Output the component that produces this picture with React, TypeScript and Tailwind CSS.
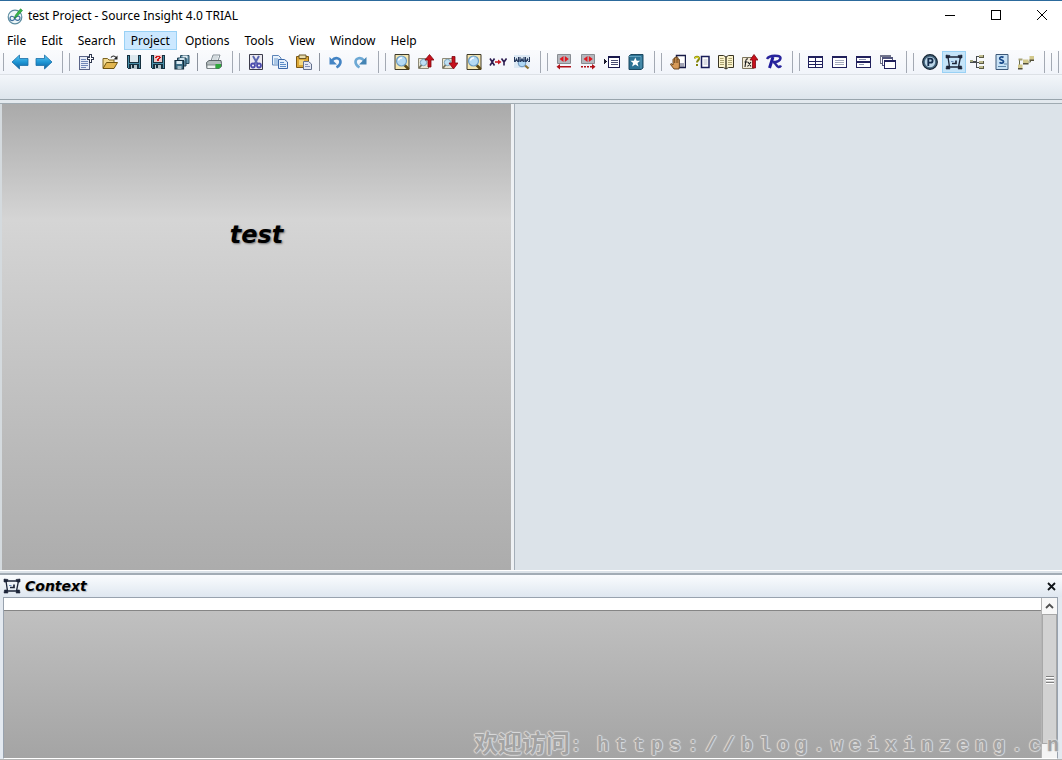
import { Fragment, type ReactNode } from "react";

const MENUS = ["File", "Edit", "Search", "Project", "Options", "Tools", "View", "Window", "Help"];

// 16x16 drawing area shared by all toolbar glyphs.
function Glyph({ children, crisp = false }: { children: ReactNode; crisp?: boolean }) {
  return (
    <svg
      width="16"
      height="16"
      viewBox="0 0 16 16"
      fill="none"
      shapeRendering={crisp ? "crispEdges" : "auto"}
      aria-hidden="true"
    >
      {children}
    </svg>
  );
}

function Arrow({ flip = false }: { flip?: boolean }) {
  return (
    <svg width="18" height="16" viewBox="0 0 18 16" aria-hidden="true">
      <defs>
        <linearGradient id={flip ? "arrR" : "arrL"} x1="0" y1="0" x2="0" y2="1">
          <stop offset="0" stopColor="#5cc8f2" />
          <stop offset="0.5" stopColor="#1f97d6" />
          <stop offset="1" stopColor="#0e5e9c" />
        </linearGradient>
      </defs>
      <path
        d={flip ? "M17 8 9.500 1v3.500H1v7h8.500V15z" : "M1 8l7.500-7v3.500H17v7H8.500V15z"}
        fill={flip ? "url(#arrR)" : "url(#arrL)"}
        stroke="#1a6ea8"
        strokeWidth="0.8"
      />
    </svg>
  );
}

function Floppy({ mark = false }: { mark?: boolean }) {
  return (
    <Glyph crisp>
      <path d="M1 1h14v14H2l-1-1z" fill="#16303f" />
      <path d="M2 2h1v12H2zM13 2h1v12h-1z" fill="#4a8ea8" />
      <path d="M4 1h8v7H4z" fill={mark ? "#eccaca" : "#dce8ee"} />
      <path d="M2 9h12v1H2z" fill="#4a8ea8" />
      <path d="M5 11h6v4H5z" fill="#b8c6cc" />
      <path d="M6 11h2v3H6z" fill="#16303f" />
      {mark && <path d="M6 2h4v1H6zM9 3h2v1H9zM8 4h2v1H8zM7 5h2v1H7zM7 6h2v1H7zM5 3h2v1H5z" fill="#d01818" />}
    </Glyph>
  );
}

// Magnifier lens over a framed page.
function Lens() {
  return (
    <Glyph>
      <path d="M1 .5h14v15H1z" fill="#f5e6b0" stroke="#3c3828" />
      <path d="M10 10.500l4 4" stroke="#5c4814" strokeWidth="2.600" strokeLinecap="round" />
      <circle cx="7.500" cy="7" r="5" fill="#b4daf4" stroke="#6c9cc4" strokeWidth="1.200" />
      <path d="M4.500 6.500a3 3 0 0 1 3.500-2.500" stroke="#fff" strokeWidth="1.500" />
    </Glyph>
  );
}

function LensArrow({ down = false }: { down?: boolean }) {
  return (
    <Glyph>
      <path d="M.5 4.500h10v10H.5z" fill="#ece8d4" stroke="#8d8a78" />
      <circle cx="5.500" cy="8.500" r="3.200" fill="#c0e0f4" stroke="#7aa2bc" />
      <path d="M3.500 11L1 14" stroke="#75705c" strokeWidth="1.800" />
      <path
        d={down ? "M10 2.500h3V9h3l-4.500 6L7 9h3z" : "M10 13h3V6h3L11.500.5 7 6h3z"}
        fill="#c8101c"
        stroke="#7c0810"
        strokeWidth="0.8"
      />
    </Glyph>
  );
}

function DiffGlyph({ right = false }: { right?: boolean }) {
  return (
    <Glyph>
      <path d="M1.500.5h13v9h-13z" fill="#b4b8be" stroke="#888c92" />
      <path d="M7.500 2v6L3.500 5zM8.800 2v6l4-3z" fill="#e01820" />
      {right ? (
        <path d="M1 12h2v1.500H1zM4 12h2v1.500H4zM7 12h2v1.500H7zM10 12h2v1.500h-2zM12 10l3.500 2.700L12 15.500z" fill="#b01018" />
      ) : (
        <path d="M4 10v5.500L.5 12.700zM4 12h11v1.500H4z" fill="#b01018" />
      )}
    </Glyph>
  );
}

// Wireframe box with corner handles, used by the toolbar and the Context pane.
function ContextGlyph() {
  return (
    <svg width="18" height="16" viewBox="0 0 18 16" fill="none" aria-hidden="true">
      <path d="M3 3h12.500L13.500 13H4.500z" stroke="#1c2438" strokeWidth="1.300" />
      <path d="M1 1l4 .5L4 4H1zM17 1l-4 .5L14 4h3zM1 15l.5-3H4l1 3zM17 15l-.5-3H14l-1 3z" fill="#1c2438" stroke="#1c2438" strokeWidth="0.6" />
      <path d="M7 9.500h4v-3" stroke="#1c2438" strokeWidth="1.700" />
      <path d="M6 7.500h2.500" stroke="#6a8cbc" />
    </svg>
  );
}

function WindowGlyph({ kind }: { kind: "grid" | "single" | "rows" | "stack" }) {
  if (kind === "stack") {
    return (
      <Glyph crisp>
        <path d="M0 1h11v9H0z" fill="#70748c" />
        <path d="M1 3h9v6H1z" fill="#fff" />
        <path d="M2 3h11v9H2z" fill="#50547c" />
        <path d="M3 5h9v6H3z" fill="#fff" />
        <path d="M4 6h12v9H4z" fill="#20205c" />
        <path d="M5 8h10v6H5z" fill="#fff" />
      </Glyph>
    );
  }
  return (
    <Glyph crisp>
      <path d="M0 2h15v12H0z" fill="#20205c" />
      {kind === "grid" && <path d="M1 4h6v3H1zM8 4h6v3H8zM1 8h6v2H1zM8 8h6v2H8zM1 11h6v2H1zM8 11h6v2H8z" fill="#fff" />}
      {kind === "single" && (
        <>
          <path d="M1 4h13v9H1z" fill="#fff" />
          <path d="M3 6h9v1H3zM3 8h9v1H3zM3 10h9v1H3z" fill="#a4aabc" />
        </>
      )}
      {kind === "rows" && (
        <>
          <path d="M1 4h13v3H1zM1 9h13v4H1z" fill="#fff" />
          <path d="M3 5h7v1H3zM3 10h5v1H3z" fill="#8c94ac" />
        </>
      )}
    </Glyph>
  );
}

const newFile = (
  <Glyph crisp>
    <path d="M1 2h11v14H1z" fill="#5a6488" />
    <path d="M2 3h9v12H2z" fill="#e6ecf8" />
    <path d="M3 5h5v1H3zM3 7h7v1H3zM3 9h7v1H3zM3 11h7v1H3zM3 13h5v1H3z" fill="#7086b8" />
    <path d="M11 0h3v3h2v3h-2v3h-3V6H9V3h2z" fill="#303850" />
    <path d="M12 1h1v3h2v1h-2v3h-1V5h-2V4h2z" fill="#fff" />
  </Glyph>
);

const openFile = (
  <Glyph>
    <path d="M1 14V4.500h4.500l1.500 1.500H12v3" fill="#f0d890" stroke="#7c6420" />
    <path d="M1 14.500L4.500 8.500H15.500L12 14.500z" fill="#e2b650" stroke="#6e5410" />
    <path d="M9 3.500c1.500-2 3.500-2 5 0" stroke="#222" strokeWidth="1.200" />
    <path d="M15.500 1.500v4h-4z" fill="#222" />
  </Glyph>
);

const saveAll = (
  <Glyph>
    <path d="M6.500 1.500H15v8H6.500z" fill="#6c9cb4" stroke="#284c60" />
    <path d="M8.500 1.500h5v3h-5z" fill="#dcebf2" />
    <path d="M3.500 4H12v8H3.500z" fill="#5c8ca4" stroke="#1c3c50" />
    <path d="M5.500 4h5v3h-5z" fill="#cfe2ec" />
    <path d="M1 6.500h8.500v8.500H1z" fill="#3c6c84" stroke="#142c3c" strokeWidth="1.200" />
    <path d="M2.500 7h5.500v3H2.500z" fill="#dceaf2" />
    <path d="M3.500 12h4v3h-4z" fill="#a4bcc8" />
  </Glyph>
);

const printer = (
  <Glyph>
    <path d="M5 7l2-6h7l-2 6z" fill="#f4f8fa" stroke="#76828a" strokeWidth="0.9" />
    <path d="M7 3h5M6.500 5h5" stroke="#a4b0b8" strokeWidth="0.8" />
    <path d="M.5 8.500L3 6.500h12l.5 3v3L13 14.500H1z" fill="#b4bcbe" stroke="#4e585c" strokeWidth="0.9" />
    <path d="M1 11h9v3.500H1z" fill="#eef2f2" stroke="#6e787c" strokeWidth="0.8" />
    <path d="M9.500 10h5.500v2.500l-2 2H9.500z" fill="#2fa83c" />
  </Glyph>
);

const cut = (
  <Glyph>
    <path d="M1.500.5h13v15h-13z" fill="#eceaf0" stroke="#3c3c4c" />
    <path d="M5 2l4.500 8M11 2L6.500 10" stroke="#5a66b0" strokeWidth="1.900" />
    <circle cx="5" cy="11.500" r="2" stroke="#4c4cae" strokeWidth="1.800" />
    <circle cx="11" cy="11.500" r="2" stroke="#4c4cae" strokeWidth="1.800" />
  </Glyph>
);

const copy = (
  <Glyph>
    <path d="M.5 1.500h6l2.500 2.500v7H.5z" fill="#e8f2fc" stroke="#5c84b8" />
    <path d="M2 5h4M2 7h4M2 9h4" stroke="#6c9cd0" />
    <path d="M6.500 5.500h6L15.500 8v6.500h-9z" fill="#e4effb" stroke="#3c68a8" />
    <path d="M8 8.500h4M8 10.500h6M8 12.500h6" stroke="#5c8cc8" />
  </Glyph>
);

const paste = (
  <Glyph>
    <path d="M.5 2.500h12v11H.5z" fill="#dca838" stroke="#7c5814" />
    <path d="M3 1h7v3.500H3z" fill="#e8dcac" stroke="#6c5828" />
    <path d="M3 6h5v5H3z" fill="#f4d880" />
    <path d="M7.500 7.500h5l3 2.500v5.500h-8z" fill="#e4e8f4" stroke="#64708c" />
    <path d="M9 10.500h3M9 12.500h5" stroke="#8490b4" />
  </Glyph>
);

const undo = (
  <Glyph>
    <path d="M4 6.500C7 2.500 12.500 4 12.500 8c0 2.500-1.500 4-4 5.500" stroke="#4484c4" strokeWidth="2.600" />
    <path d="M1.500 3v7.500H9z" fill="#4484c4" />
  </Glyph>
);

const redo = (
  <Glyph>
    <path d="M12 6.500C9 2.500 3.500 4 3.500 8c0 2.500 1.500 4 4 5.500" stroke="#6ca8d4" strokeWidth="2.600" />
    <path d="M14.500 3v7.500H7z" fill="#4484b4" />
  </Glyph>
);

const replace = (
  <svg width="18" height="16" viewBox="0 0 18 16" fill="none" aria-hidden="true">
    <path d="M1 4.500l4.500 7M5.500 4.500L1 11.500M12.500 4.500L15 8l2.500-3.500M15 8v3.500" stroke="#2c1c50" strokeWidth="1.600" />
    <path d="M6 8h4" stroke="#c81c24" strokeWidth="1.600" />
    <path d="M9 5.500L12.500 8 9 10.500z" fill="#c81c24" />
  </svg>
);

const webSearch = (
  <Glyph>
    <path d="M0 1h16v13H0z" fill="#dce9f4" />
    <path d="M10 10.500l4.500 4" stroke="#8c7030" strokeWidth="2.200" />
    <circle cx="8" cy="9" r="3.800" fill="#b0d8f4" stroke="#6c94bc" />
    <path d="M.5 3v4.500h.8L2.500 5l1.200 2.500h.8V3M6 3v4.500h.8L8 5l1.200 2.500h.8V3M11.500 3v4.500h.8L13.500 5l1.200 2.500h.8V3" stroke="#24385c" strokeWidth="1.100" />
  </Glyph>
);

const jumpList = (
  <Glyph crisp>
    <path d="M0 5h1v1h1v1h1v1H2v1H1v1H0z" fill="#18182c" />
    <path d="M4 2h12v12H4z" fill="#18184c" />
    <path d="M5 4h10v9H5z" fill="#fff" />
    <path d="M7 6h7v1H7zM7 8h7v1H7zM7 10h7v1H7z" fill="#484c70" />
  </Glyph>
);

const bookmark = (
  <Glyph>
    <path d="M1 2l2-1.500h12V14l-2 1.500H1z" fill="#2c7294" stroke="#1c4860" />
    <path d="M13 2.500v12M1 2.500h12" stroke="#6cacc8" strokeWidth="0.8" />
    <path d="M7.300 3.500l1.400 3.300h3.500L9.500 9l1 3.500-3.200-2-3.200 2 1-3.500L2.400 6.800h3.500z" fill="#fff" />
  </Glyph>
);

const handPage = (
  <Glyph>
    <path d="M6.500 1.500h9v12h-9z" fill="#fff" stroke="#181c48" strokeWidth="1.400" />
    <path d="M9 10h5M9 12h5" stroke="#484c70" />
    <path d="M4 15L.5 10.500 1 9.500l2 1.500V5.500c0-1 1.500-1 1.500 0V4c0-1 1.700-1 1.700 0v-.5c0-1 1.600-1 1.600.5v1.500c0-1 1.600-.8 1.600.3V12L9 15z" fill="#d69a58" stroke="#603c14" strokeWidth="0.9" />
    <path d="M4.500 5.500V9M6.200 4v5M7.800 5v4" stroke="#603c14" strokeWidth="0.7" />
  </Glyph>
);

const helpPage = (
  <Glyph>
    <path d="M7.500 2.500h7.500v11H7.500z" fill="#fff" stroke="#181c58" strokeWidth="1.500" />
    <path d="M9.500 6h4M9.500 8h4M9.500 10h4" stroke="#b8bcc8" />
    <path d="M1 4.500C1 2 5 2 5 4.500 5 6.500 3 6.500 3 8.500M3 10v2" stroke="#84840c" strokeWidth="2" />
    <path d="M1.300 4.500C1.300 2.500 4.700 2.500 4.700 4.500" stroke="#e8e420" strokeWidth="1.100" />
  </Glyph>
);

const book = (
  <Glyph>
    <path d="M.5 1.500h5L8 3l2.500-1.500h5v12h-5L8 15l-2.500-1.500h-5z" fill="#fbf3cc" stroke="#383424" />
    <path d="M8 3v12" stroke="#383424" strokeWidth="1.400" />
    <path d="M2 4.500h3.500M2 6.500h4M2 8.500h4M2 10.500h4M10.500 4.500H14M10 6.500h4M10 8.500h4M10 10.500h4" stroke="#a09868" strokeWidth="0.9" />
  </Glyph>
);

const fxUp = (
  <Glyph>
    <path d="M.5 3.500h11v11H.5z" fill="#f4ecd8" stroke="#7c745c" />
    <path d="M6 5c-1.500-.5-2 .5-2.200 2L3 13M2.500 8h3M6 8l3 4.500M9 8l-3.500 4.500" stroke="#1c1c1c" strokeWidth="1.100" />
    <path d="M10.500 14h3V6H16L12 .5 8 6h2.500z" fill="#c8101c" stroke="#7c0810" strokeWidth="0.8" />
  </Glyph>
);

const scriptR = (
  <Glyph>
    <path d="M7 3L3.500 14" stroke="#201c9c" strokeWidth="3" />
    <path d="M1 5C3 1.500 8 1.500 12 2c4 .5 3 5-2.500 6H7c3 .5 3 4.500 5.500 5 1.500.2 2-.5 2.500-1.500" stroke="#28249c" strokeWidth="2.500" />
  </Glyph>
);

const projectP = (
  <Glyph>
    <circle cx="8" cy="8" r="7.300" fill="#44647c" stroke="#142434" strokeWidth="1.200" />
    <circle cx="8" cy="8" r="5.200" fill="#bcd6e8" />
    <path d="M6.300 12V4.700h2.200c2.800 0 2.800 4 0 4H6.300" stroke="#142c4c" strokeWidth="1.800" />
  </Glyph>
);

const relation = (
  <Glyph crisp>
    <path d="M0 7h6v2H0zM6 2h1v12H6zM6 2h3v1H6zM6 8h3v1H6zM6 13h3v1H6z" fill="#484c50" />
    <path d="M9 1h5v3H9zM9 7h5v3H9zM9 12h5v3H9z" fill="#5c5c44" />
    <path d="M9 1h4v2H9zM9 7h4v2H9zM9 12h4v2H9z" fill="#bcb88c" />
    <path d="M0 6h3v2H0z" fill="#a0a47c" />
  </Glyph>
);

const symbolS = (
  <Glyph>
    <path d="M2 .5h12v15H2z" fill="#c8e2f6" stroke="#3c5878" />
    <path d="M9.500 3.500C8 2.300 5.500 3 5.800 4.700c.3 1.500 3.700 1.100 3.700 2.800 0 1.800-2.700 2-4 .9" stroke="#184888" strokeWidth="1.800" />
    <path d="M10 10h3M4 12.500h8" stroke="#5c84a8" />
  </Glyph>
);

const treeFiles = (
  <svg width="18" height="16" viewBox="0 0 18 16" fill="none" aria-hidden="true">
    <path d="M2.500 14V5.500H5M9 8h4.500V5" stroke="#686c4c" />
    <path d="M1 10.500h4.500V15H1zM6 5.500h5.500V10H6zM12.500 2h4.500v4.500h-4.500z" fill="#d2c88c" />
    <path d="M1 14h4.500v1.500H1zM6 9h5.500v1.500H6zM12.500 5.500H17V7h-4.500z" fill="#54503c" />
    <path d="M1.500 4.500h4v2h-4z" fill="#a8a478" />
  </svg>
);

type Tool = { label: string; icon: ReactNode; active?: boolean; divider?: boolean };

const TOOLBARS: Tool[][] = [
  [
    { label: "Go Back", icon: <Arrow /> },
    { label: "Go Forward", icon: <Arrow flip /> },
  ],
  [
    { label: "New", icon: newFile },
    { label: "Open", icon: openFile },
    { label: "Save", icon: <Floppy /> },
    { label: "Save As", icon: <Floppy mark /> },
    { label: "Save All", icon: saveAll, divider: true },
    { label: "Print", icon: printer },
  ],
  [
    { label: "Cut", icon: cut },
    { label: "Copy", icon: copy },
    { label: "Paste", icon: paste, divider: true },
    { label: "Undo", icon: undo },
    { label: "Redo", icon: redo },
  ],
  [
    { label: "Search", icon: <Lens /> },
    { label: "Search Backward", icon: <LensArrow /> },
    { label: "Search Forward", icon: <LensArrow down /> },
    { label: "Search Files", icon: <Lens /> },
    { label: "Replace", icon: replace },
    { label: "Search Web", icon: webSearch },
  ],
  [
    { label: "Previous Difference", icon: <DiffGlyph /> },
    { label: "Next Difference", icon: <DiffGlyph right /> },
    { label: "Go To Line", icon: jumpList },
    { label: "Bookmark", icon: bookmark },
  ],
  [
    { label: "Jump To Definition", icon: handPage },
    { label: "Symbol Info", icon: helpPage },
    { label: "Browse Symbols", icon: book },
    { label: "Jump To Caller", icon: fxUp },
    { label: "Lookup References", icon: scriptR },
  ],
  [
    { label: "Tile Windows", icon: <WindowGlyph kind="grid" /> },
    { label: "One Window", icon: <WindowGlyph kind="single" /> },
    { label: "Split Rows", icon: <WindowGlyph kind="rows" /> },
    { label: "Cascade", icon: <WindowGlyph kind="stack" /> },
  ],
  [
    { label: "Project Window", icon: projectP },
    { label: "Context Window", icon: <ContextGlyph />, active: true },
    { label: "Relation Window", icon: relation },
    { label: "Symbol Window", icon: symbolS },
    { label: "File Tree", icon: treeFiles },
  ],
  [],
  [],
];

function ToolGroup({ tools }: { tools: Tool[] }) {
  return (
    <div className="flex shrink-0 items-center">
      <span className={`h-[18px] w-px shrink-0 bg-[#a3a9b3] ${tools.length ? "mr-1" : ""}`} />
      {tools.map((t) => (
        <Fragment key={t.label}>
          <button
            aria-label={t.label}
            className={`flex h-[22px] w-6 shrink-0 items-center justify-center border ${
              t.active ? "border-[#99d1f5] bg-[#c5e4f9]" : "border-transparent hover:bg-[#e0effb]"
            }`}
          >
            {t.icon}
          </button>
          {t.divider && <span className="mr-1 ml-[3px] h-[18px] w-px shrink-0 bg-[#8d939e]" />}
        </Fragment>
      ))}
      <span className="mx-[6px] h-[22px] w-px shrink-0 bg-[#a3a9b3]" />
    </div>
  );
}

function TitleBar() {
  return (
    <header className="flex h-[31px] shrink-0 items-center border-t border-[#2c6a9c] bg-white">
      <svg className="mr-1 ml-[7px]" width="17" height="17" viewBox="0 0 17 17" fill="none" aria-hidden="true">
        <circle cx="8" cy="9" r="6.800" fill="#eef6f8" stroke="#5c8ca0" strokeWidth="1.200" />
        <path d="M3 10.500c0-3 3.500-3 5 0s5 2 5-.5-3.500-2.500-5 .5-5 2.500-5 0z" stroke="#3c6c9c" strokeWidth="1.200" />
        <path d="M7 10.500L8.500 7 13.500.8l2 1.700L10 8.500z" fill="#38b848" stroke="#1c8030" strokeWidth="0.6" />
      </svg>
      <h1 className="text-[12px]">test Project - Source Insight 4.0 TRIAL</h1>
      <div className="ml-auto flex gap-[6px]">
        <button aria-label="Minimize" className="flex h-7 w-10 items-center justify-center">
          <svg width="12" height="12" shapeRendering="crispEdges"><path d="M1 5h10v1H1z" /></svg>
        </button>
        <button aria-label="Maximize" className="flex h-7 w-10 items-center justify-center">
          <svg width="12" height="12" fill="none" stroke="#000" shapeRendering="crispEdges"><path d="M1.500.5h9v9h-9z" /></svg>
        </button>
        <button aria-label="Close" className="flex h-7 w-10 items-center justify-center">
          <svg width="12" height="12" fill="none" stroke="#000"><path d="M1 0l10 10M11 0L1 10" /></svg>
        </button>
      </div>
    </header>
  );
}

function ContextPane() {
  return (
    <section className="flex h-[24.6%] shrink-0 flex-col border-t-2 border-[#a2acb5] bg-[#e3e9f0]">
      <div className="flex h-[22px] shrink-0 items-center bg-linear-to-b from-[#fafcfe] to-[#dfe7f0] pr-[5px] pl-[3px]">
        <ContextGlyph />
        <h2 className="ml-1 font-['DejaVu_Sans',sans-serif] text-[14px] leading-5 font-bold italic [text-shadow:1px_1px_1px_#a8b0b8]">
          Context
        </h2>
        <button aria-label="Close Context" className="ml-auto flex h-3 w-3 items-center justify-center">
          <svg width="9" height="9" stroke="#101418" strokeWidth="1.800"><path d="M1 1l7 7M8 1L1 8" /></svg>
        </button>
      </div>
      <div className="mr-1 ml-[3px] flex min-h-0 flex-1 border border-[#98a2ae] border-b-white">
        <div className="flex min-w-0 flex-1 flex-col">
          <div className="h-[13px] shrink-0 border-b border-[#858585] bg-white" />
          <div className="flex-1 bg-linear-to-b from-[#c0c0c0] to-[#a4a4a4]" />
        </div>
        <div className="flex w-4 shrink-0 flex-col border-l border-[#b4b4b4] bg-[#f0f0f0]">
          <button aria-label="Scroll up" className="flex h-4 shrink-0 items-center justify-center bg-[#f8f8f8]">
            <svg width="9" height="6" fill="none" stroke="#505050" strokeWidth="1.800"><path d="M1 5l3.500-3.500L8 5" /></svg>
          </button>
          <div className="flex flex-1 flex-col items-center justify-center gap-[2px] border border-[#a8a8a8] bg-[#d2d2d2]">
            <span className="h-px w-2 bg-[#808080] shadow-[0_1px_0_#fff]" />
            <span className="h-px w-2 bg-[#808080] shadow-[0_1px_0_#fff]" />
            <span className="h-px w-2 bg-[#808080] shadow-[0_1px_0_#fff]" />
          </div>
          <button aria-label="Scroll down" className="h-[14px] shrink-0 bg-[#f4f4f4]" />
        </div>
      </div>
      <div className="h-px shrink-0 bg-[#b4b4b4]" />
    </section>
  );
}

function Watermark() {
  return (
    <div className="pointer-events-none absolute right-0 bottom-0 flex h-9 items-end text-[#a2a2a2] [text-shadow:1px_0_1px_#dcdcdc,-1px_0_1px_#dcdcdc,0_1px_1px_#dcdcdc,0_-1px_1px_#dcdcdc]">
      <span className="font-['Noto_Sans_CJK_SC',sans-serif] text-[24px] leading-9 font-bold">欢迎访问</span>
      <span className="flex font-['Liberation_Mono',monospace] text-[20px] leading-7 font-bold">
        <span className="w-6">:</span>
        {[..."https://blog.weixinzeng.cn"].map((c, i) => (
          <span key={i} className="w-[18px] text-center">{c}</span>
        ))}
      </span>
    </div>
  );
}

export default function App() {
  return (
    <div className="relative flex h-screen flex-col overflow-hidden bg-[#e3e9ee] font-['Noto_Sans',sans-serif] text-black">
      <TitleBar />
      <nav className="flex h-[19px] shrink-0 gap-px bg-white">
        {MENUS.map((m) => (
          <button
            key={m}
            className={`h-[19px] border px-[6px] text-[12px] leading-4 ${
              m === "Project" ? "border-[#99d1f5] bg-[#cce8ff]" : "border-transparent"
            }`}
          >
            {m}
          </button>
        ))}
      </nav>
      <div className="flex h-[25px] shrink-0 items-center overflow-hidden border-b border-[#dde1e6] bg-linear-to-b from-[#fafbfd] to-[#f1f4fa] pl-[3px]">
        {TOOLBARS.map((tools, i) => (
          <ToolGroup key={i} tools={tools} />
        ))}
      </div>
      <div className="h-[25px] shrink-0 border-b border-[#98a4ac] bg-linear-to-b from-[#f3f6fa] to-[#dde5ec]" />
      <main className="mt-[3px] flex min-h-0 flex-1 border-t border-[#a0abb2]">
        <section className="flex w-[48.4%] justify-center border-r-[3px] border-l-2 border-r-[#eef1f4] border-l-[#d4dade] bg-linear-to-b from-[#aaaaaa] via-[#d5d5d5] via-25% to-[#acacac]">
          <h2 className="mt-[117px] font-['DejaVu_Sans',sans-serif] text-[24px] leading-7 font-bold italic [text-shadow:1px_1px_2px_#707070]">
            test
          </h2>
        </section>
        <section className="flex-1 border-l border-[#a4aeb8] bg-[#dce3e9]" />
      </main>
      <div className="h-[3px] shrink-0 border-t border-white bg-[#dce3e9]" />
      <ContextPane />
      <Watermark />
    </div>
  );
}
